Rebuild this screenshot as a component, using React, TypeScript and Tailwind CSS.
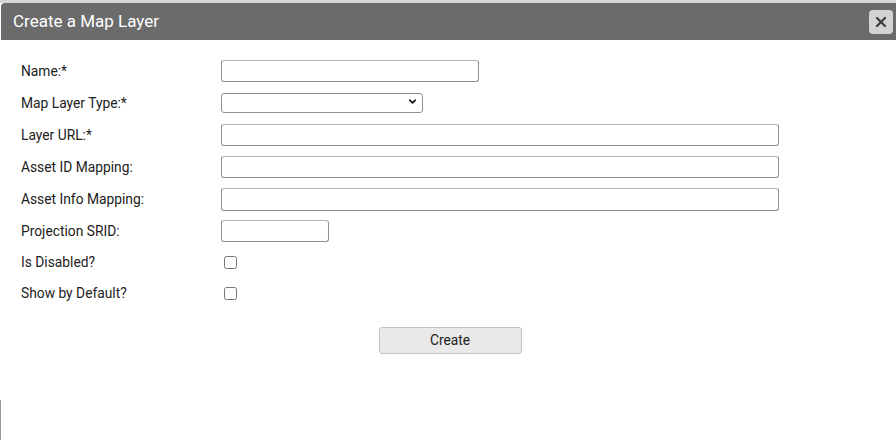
import { ChevronDown, X } from 'lucide-react';

const labelCls = 'w-[200px] shrink-0 text-[13.8px] text-[#222]';

const Field = ({ label, children }: { label: string; children: React.ReactNode }) => (
  <div className="flex items-center h-[32px]">
    <label className={labelCls}>{label}</label>
    {children}
  </div>
);

const inputCls =
  'h-[22px] border border-[#8f8f8f] border-t-[#b5b5b5] rounded-[3px] bg-white px-1 text-[13px] outline-none';

export default function App(): React.JSX.Element {
  return (
    <div
      className="relative w-[896px] h-[440px] bg-white flex flex-col overflow-hidden"
      style={{ fontFamily: 'Roboto, "Liberation Sans", sans-serif' }}
    >
      {/* page behind the dialog */}
      <div className="h-[3px] bg-[#d6d6d6] shrink-0" />

      {/* title bar */}
      <div className="ml-[1px] h-[37px] shrink-0 bg-[#6b6b6b] rounded-tl-[4px] flex items-center justify-between pl-[12px] pr-[3px]">
        <h1 className="text-white text-[17px] leading-none">Create a Map Layer</h1>
        <button
          className="w-[24px] h-[24px] rounded-[4px] bg-[#d3d3d3] flex items-center justify-center"
          title="Close"
        >
          <X className="w-[16px] h-[16px] text-[#3c3c3c]" strokeWidth={3.25} />
        </button>
      </div>

      {/* form */}
      <div className="pl-[21px] pt-[15px] flex flex-col">
        <Field label="Name:*">
          <input className={`${inputCls} w-[258px]`} />
        </Field>
        <Field label="Map Layer Type:*">
          <div className="relative">
            <select className="appearance-none w-[202px] h-[20px] border border-[#8f8f8f] rounded-[3px] bg-white text-[13px] outline-none" />
            <ChevronDown
              className="absolute right-[5px] top-[5px] w-[11px] h-[11px] text-[#111] pointer-events-none"
              strokeWidth={3.5}
            />
          </div>
        </Field>
        <Field label="Layer URL:*">
          <input className={`${inputCls} w-[558px]`} />
        </Field>
        <Field label="Asset ID Mapping:">
          <input className={`${inputCls} w-[558px]`} />
        </Field>
        <Field label="Asset Info Mapping:">
          <input className={`${inputCls} w-[558px] h-[23px]`} />
        </Field>
        <Field label="Projection SRID:">
          <input className={`${inputCls} w-[108px]`} />
        </Field>
        <div className="flex items-center h-[31px]">
          <label className={labelCls}>Is Disabled?</label>
          <input type="checkbox" className="m-0 ml-[3px] w-[13px] h-[13px]" />
        </div>
        <div className="flex items-center h-[30px]">
          <label className={labelCls}>Show by Default?</label>
          <input type="checkbox" className="m-0 ml-[3px] w-[13px] h-[13px]" />
        </div>
      </div>

      <div className="flex justify-center mt-[19px] pl-[4px]">
        <button className="w-[143px] h-[27px] bg-[#e9e9e9] border border-[#c3c3c3] rounded-[3px] text-[13.8px] text-[#222]">
          Create
        </button>
      </div>

      {/* edge of the page behind, bottom left */}
      <div className="absolute left-0 top-[400px] w-[1px] h-[40px] bg-[#9a9a9a]" />
    </div>
  );
}
